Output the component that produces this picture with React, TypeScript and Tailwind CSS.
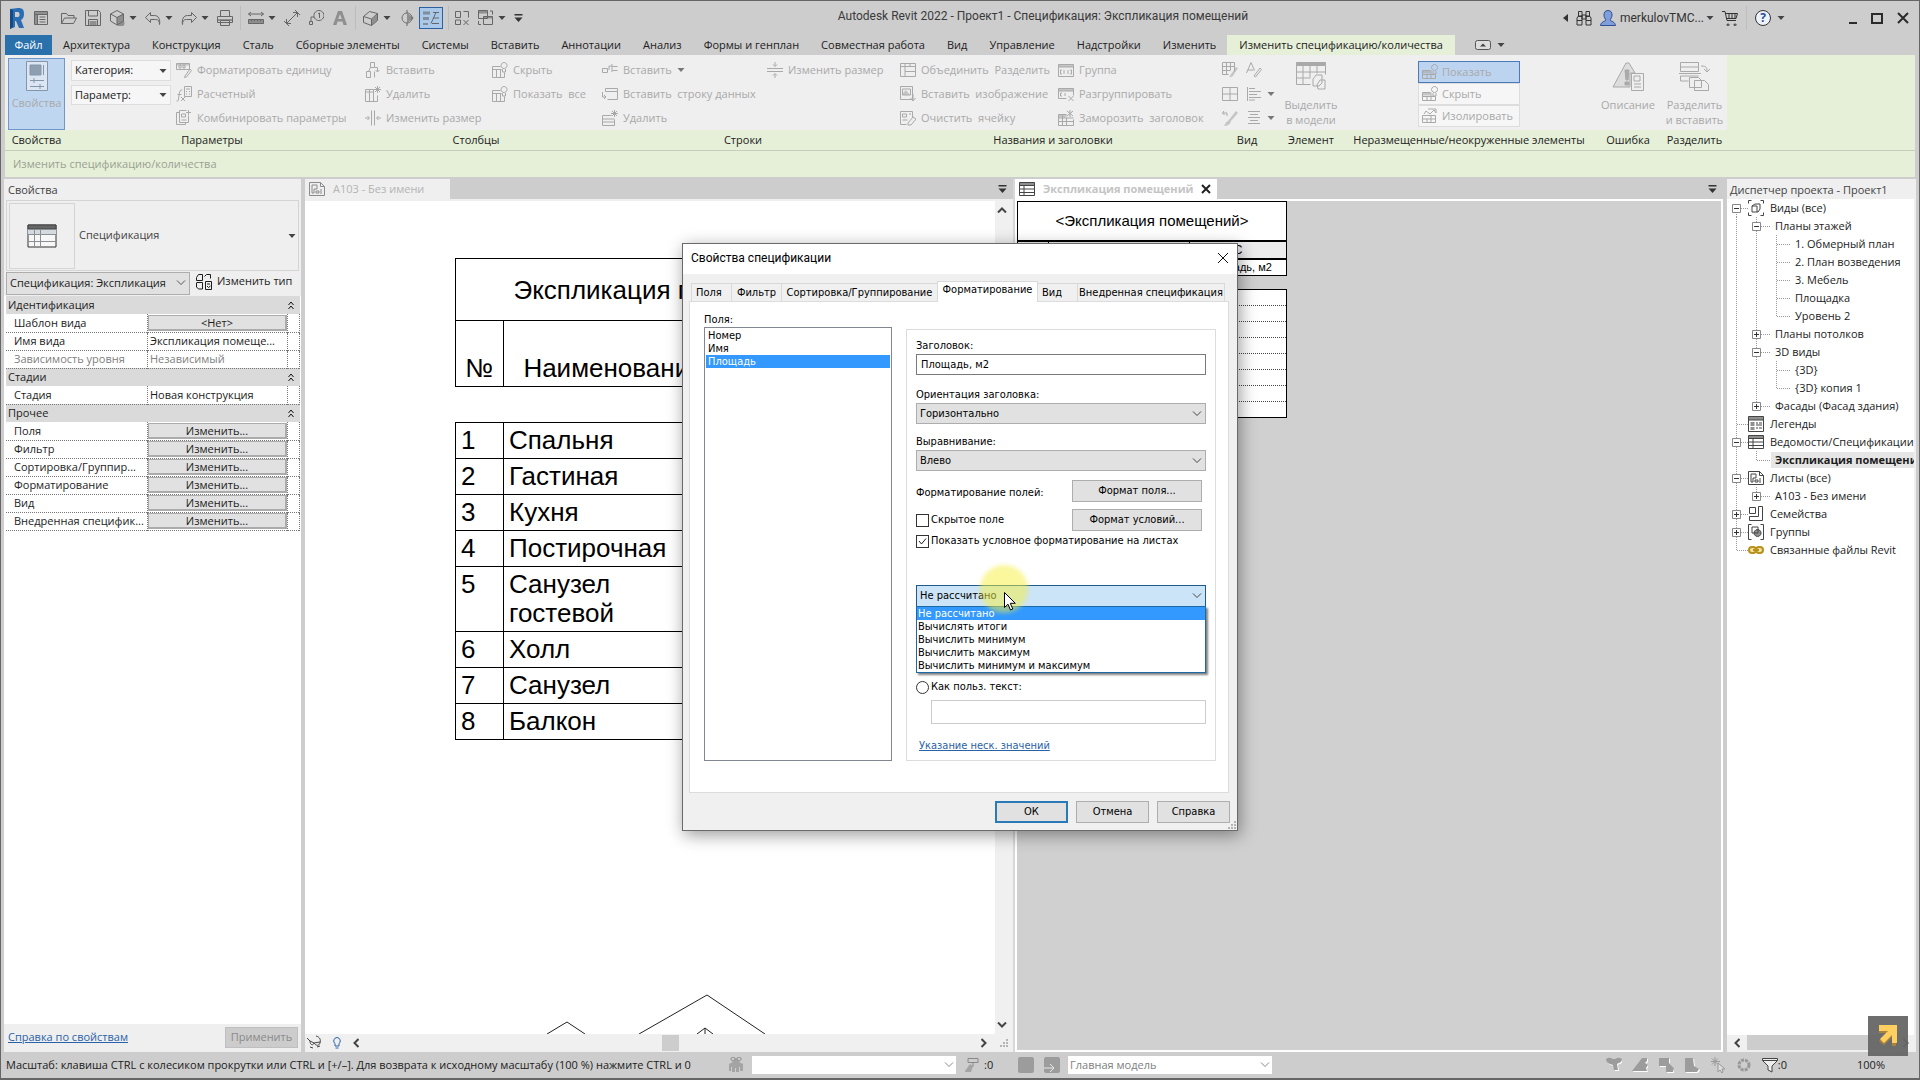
import type { ReactNode } from "react";

interface IconShape {
    d: string;
    fill?: string;
}

const icons: Record<string, IconShape> = {
    props: { d: "M1.5 1.5h13v13h-13zM1.5 4.5h13M4.5 4.5v10M6.5 7h6M6.5 9.5h6M6.5 12h6", fill: "M1.5 1.5h13v3h-13zM2 5h2v9h-2z" },
    open: { d: "M.5 13.5v-10h5l1.5 2h6v2.5M.5 13.5l3-5.500h12l-3 5.500z" },
    save: { d: "M.5 .5h13l2 2v13h-15zM3.500 .5v5.500h9v-5.500M3.500 15.500v-6h9v6", fill: "M4.500 11h7v4h-7z" },
    package: { d: "M8 .5l6.500 3.500v7l-6.500 4-6.500-4v-7zM1.500 4l6.500 3.500 6.500-3.500M8 7.500v7", fill: "M8 7.500l6-3.500v6a4 4 0 1 1-6 5z" },
    undo: { d: "M5.500 2.500l-5 5 5 5v-3h5c3 0 4 1.500 4 5 1-5-1-9-5-9h-4z" },
    redo: { d: "M10.500 2.500l5 5-5 5v-3h-5c-3 0-4 1.500-4 5-1-5 1-9 5-9h4z" },
    print: { d: "M3.500 6v-5.500h9v5.500M.5 6.500h15v6h-15zM3.500 10.500h9v5h-9z", fill: "M1 9h14v2h-14z" },
    measure: { d: "M.5 4h15M3 2l-2.500 2 2.500 2M13 2l2.500 2-2.500 2M.5 9.500h15v4h-15zM3.500 9.500v2M6.500 9.500v2M9.500 9.500v2M12.500 9.500v2", fill: "M.5 10h15v4h-15z" },
    dim: { d: "M3 13l10-10M2.500 9v4.500h4.500M9 2.500h4.500v4.500M0 11l5 5M11 0l5 5" },
    tag: { d: "M1.500 14.500h3v-3h-3zM3 11v-4h3M11 10.500a5 5 0 1 0-.1 0M10 4l1.500-1v5" },
    text: { d: "", fill: "M6 1h4l5 14h-3.500l-1-3.500h-5l-1 3.500h-3.500zM8 4l-1.800 5h3.600z" },
    house: { d: "M.5 6.500l6-5 8 2v7l-6 5-8-3zM.5 6.500l8 2.500 6-5.500M8.500 9v6.500", fill: "M9 9l5-4.500v6l-5 4.500z" },
    section: { d: "M8 0v3M8 13v3M8 3a5 5 0 1 0 .1 0", fill: "M8 3l7 5-7 5z" },
    thin: { d: "M10 2.500h6M8 13.500l5-11M10 8h6M9 13.500h7", fill: "M0 1.500h7v3h-7zM0 7h6v3h-6zM0 13h5v2h-5z" },
    closeHidden: { d: "M1.500 1.500h5v6h-5zM9.500 1.500h5v6M1.500 10h5v4.500h-5zM9.500 10l5 5M14.500 10l-5 5" },
    windows: { d: "M.5 .5h9v8h-9zM5.500 6.500h9v8h-9zM12 1h2.500v3.500M3 14.500h-2.500v-3.500", fill: "M.5 .5h9v3h-9zM5.500 6.500h9v2h-9z" },
    unit: { d: "M.5 1.500h13v6h-13zM3 6v-3h2v3zM7 6v-3h2v3zM9 14l5-7 1.500 1.500-5 6.500-2 .5z", fill: "M.5 1.500h13v2h-13z" },
    calc: { d: "M8.500 .5h7v10h-7zM10 3h4M10 5.500h1M13 5.500h1M10 8h1M13 8h1M6.500 4c-3-1-3 3-4 9-.3 2-1 2.500-2 2M1.500 8.500h4M5 11l4 4M9 11l-4 4" },
    combine: { d: "M3.500 2.500h-3v12h9v-2M3.500 .5h7M3.500 .5v12h9v-7M12.500 0v5M10 2.500h5M5.500 4h4v3h-4zM5.500 10h5" },
    colInsert: { d: "M5.500 .5h4v5h-4zM1.500 9.500h4v6h-4zM5.500 5.500l-2 4M9.500 5.500h3v4M10.500 8l2 2 2-2M9.500 15.500v-6" },
    colDelete: { d: "M.5 3.500h8M.5 3.500v12h12v-6M4.500 3.500v12M8.500 3.500v12M.5 6h8M10 1l5 5M15 1l-5 5M12.500 0v7M9 3.500h7" },
    colResize: { d: "M6.500 .5v15M9.500 .5v15M0 8h4M12 8h4M2.500 6l2 2-2 2M13.500 6l-2 2 2 2" },
    hide: { d: "M.5 4.500h8M.5 4.500v11h12v-5M.5 7.500h9M4.500 7.500v8M8.500 7.500v8M12 6.500a3 3 0 1 1 .1 0M10.500 7v3h3v-3" },
    rowInsert: { d: "M.5 6.500h5v4h-5zM10.500 4.500h5M10.500 8.500h5M7 8v-4h3M10 2v8" },
    rowData: { d: "M3.500 2.500h12v11h-10M3.500 2.500v3M3.500 5.500h12M.5 6v5h3M2 9l2 2-2 2" },
    rowDelete: { d: "M.5 5.500h9M.5 5.500v10h12v-6M.5 9h12M.5 12h12M10 1l5 5M15 1l-5 5M12.500 0v7M9 3.500h7" },
    rowResize: { d: "M0 6.500h16M0 9.500h16M8 0v4M8 12v4M6 2.500l2 2 2-2M6 13.500l2-2 2 2" },
    merge: { d: "M.5 1.500h15v13h-15zM.5 4.500h15M5 1.500v13M5 9.500h10M10 1.500v3" },
    image: { d: "M.5 .5h12v13h-12zM2.500 3h8v6h-8zM13 8v6M10.500 12l2.500 3 2.500-3", fill: "M3 7l3-3 4 5h-7z" },
    clear: { d: "M.5 1.500h12v6M.5 1.500v13h6M2.500 4h4v3h-4zM9 4h2M2.500 10h5M8 13l5-6 3 2-5 6h-3z" },
    group: { d: "M.5 2.500h15v12h-15zM.5 5h15M4 8h-1.500v4h1.500M12 8h1.500v4h-1.500M6 8v4M10 8v4", fill: "M.5 2.500h15v2.500h-15z" },
    ungroup: { d: "M.5 2.500h15v7M.5 2.500v10h8M.5 5h15M4 7h-1.500v3h1.500M7 7v3M10.500 10l5 5M15.500 10l-5 5", fill: "M.5 2.500h15v2.500h-15z" },
    freeze: { d: "M.5 4.500h8M.5 4.500v11h15v-6M.5 8h15M.5 11.500h15M4.500 4.500v11M8.500 8v7M12 0v7M9 1l6 5M15 1l-6 5", fill: "M.5 4.500h8v3h-8z" },
    gridBrush: { d: "M.5 .5h12v9M.5 .5v12h6M.5 4.500h12M.5 8.500h8M4.500 .5v12M8.500 .5v8", fill: "M14 5l2 1-4 6c-1 3-3 3-5 3 2-1 1-3 3-4z" },
    fontEdit: { d: "M.5 11l4.500-10.500 3.500 8M2 8h5.500M8 14l6-8 1.500 1.500-6 7.500z" },
    border: { d: "M.5 1.500h15v13h-15zM8 1.500v13M.5 8h15" },
    alignLeft: { d: "M1.500 1v14M3 2.500h6M3 5.500h12M3 8.500h8M3 11.500h12M3 14h6" },
    brush: { d: "M2 1l-1.500 2 2 2M.5 3h4.500v3", fill: "M14 1l2 2-7 8c-1 4-4 5-7 5 2-2 1-4 4-5z" },
    alignCenter: { d: "M2 1.500h12M4 4.500h8M2 7.500h12M4 10.500h8M2 13.500h12" },
    showRow: { d: "M.5 6.500h8M.5 6.500v8h13v-4M.5 10.500h13M5 10.500v4M9 6.500v8M12.500 6.500a3 3 0 1 1 .1 0M11 7v3h3v-3", fill: "M.5 6.500h8v3h-8z" },
    isolate: { d: "M.5 7.500v7h13v-7zM.5 11h13M5 11v3M9 7.500v7M2 6l2-3 4 3 4-4 2 3M6 1h8v4" },
    sched: { d: "M.5 1.500h15v13h-15zM.5 4.500h15M.5 8h15M.5 11.500h15M5 4.500v10", fill: "M.5 1.500h15v3h-15z" },
    sheet: { d: "M.5 1.500h11l4 4v9h-15zM11.500 1.500v4h4M3 4h5v4h-3v4h-2zM7 12v-2h3v2zM12 8v5" },
    views: { d: "M3.500 .5h-3v3M12.500 .5h3v3M.5 12.500v3h3M15.500 12.500v3h-3M4 6l3-2h5v5l-2 3h-6zM4 6h5v6" },
    legend: { d: "M.5 .5h15v15h-15zM.5 4h15M8 7h2M11 7h3M8 9h6M8 12h2M11 12h3", fill: "M.5 .5h15v3.500h-15zM2.500 6h4v4h-4zM2.500 11h4v3h-4z" },
    family: { d: "M1.500 1.500h6v6h-6zM10.500 .5h4v14h-13v-4h9z" },
    groups: { d: "M3.500 .5h-3v15h3M12.500 .5h3v15h-3M4 3h6v6h-6zM9.500 12.500a3.500 3.500 0 1 1 .1 0", fill: "M9.500 12.500a3.500 3.500 0 1 1 .1 0z" },
    typeEdit: { d: "M.5 3.500l2-3h4v6h-6zM8.500 2.500l2-2h4v4M.5 9v4l2 2h4v-6.500h-6M9.500 7.500h6v8h-6zM11 10h3M11 12l1.500 1.500 2-1.500" },
    binoculars: { d: "M2.500 1.500h3.500v5h-3.500zM10 1.500h3.500v5h-3.500zM1 8l1.500-2h3.500v9h-5zM15 8l-1.500-2h-3.500v9h5zM6 5h4v4h-4zM1 10.500h5M10 10.500h5" },
    cart: { d: "M0 1.500h3l2 9h9M3.500 3.500h12l-1.500 5h-9.500M6 14a1 1 0 1 0 .1 0M13 14a1 1 0 1 0 .1 0M7 3.500v5M10 3.500v5M13 3.500v5" },
    glasses: { d: "M0 3l3 3c0 4 3 5 4 2 2 3 5 3 6 0 1-3 0-6-4-7M3 6l4 2M7 8l6-1M3 12l3 1M10 12l3-1" },
    bulb: { d: "M8 2.500a3.500 3.500 0 0 1 2 6.200v2.300h-4v-2.300a3.500 3.500 0 0 1 2-6.200M6.500 13h3" },
    worker: { d: "M5 4a2 2 0 1 1 .1 0M11 4a2 2 0 1 1 .1 0", fill: "M1 7l4-2 3-4 3 4 4 2v7h-3v-4h-1v5h-3v-4h-1v4h-3v-5h-1v4h-2z" },
    painter: { d: "M4 1.500h10v4h-10zM9 5.500v4", fill: "M1 14l5-7 3 2-2 6h-6z" },
};

function Icon({ name, className = "size-4" }: { name: string; className?: string }) {
    const shape = icons[name];
    return (
        <svg viewBox="0 0 16 16" className={"shrink-0 " + className} aria-hidden="true">
            {shape.fill && <path d={shape.fill} fill="currentColor" fillRule="evenodd" opacity="0.6" />}
            <path d={shape.d} fill="none" stroke="currentColor" strokeWidth="1" />
        </svg>
    );
}

function Caret({ className = "text-[#444]" }: { className?: string }) {
    return (
        <svg viewBox="0 0 8 4" className={"h-1 w-2 shrink-0 " + className} aria-hidden="true">
            <path d="M0.500 0h7L4 4z" fill="currentColor" />
        </svg>
    );
}

function Chevron({ className }: { className?: string }) {
    return (
        <svg viewBox="0 0 10 6" className={"h-1.5 w-2.5 shrink-0 " + className} fill="none" stroke="currentColor" aria-hidden="true">
            <path d="M1 0.500l4 4 4-4" />
        </svg>
    );
}

function TabMenuArrow() {
    return (
        <svg viewBox="0 0 9 8" className="h-2 w-[9px] shrink-0 text-[#333]" aria-hidden="true">
            <path d="M0.500 0h8v1.500h-8zM0.500 3.500h8L4.500 8z" fill="currentColor" />
        </svg>
    );
}

function Divider({ className = "mx-[7px]" }: { className?: string }) {
    return <div className={"h-6 w-px shrink-0 bg-[#bdbdbd] " + className} />;
}

function ToolButton({ icon, label, drop }: { icon: string; label: string; drop?: boolean }) {
    return (
        <button aria-label={label} className="flex items-center gap-1">
            <Icon name={icon} />
            {drop && <Caret />}
        </button>
    );
}

function TitleBar() {
    return (
        <div className="flex h-[35px] items-center border-t border-[#666] bg-[#cdcdcd] pr-2.5 pl-[9px] text-[#666]">
            <svg viewBox="0 0 14 21" className="h-[21px] w-3.5 shrink-0" aria-label="Revit">
                <path d="M0 1l8-1c5 0 6 2 6 6 0 3-1 5-3 6l3 8h-5l-3-7H5v6l-5 2z" fill="#2a6db3" />
                <path d="M5 4h3c2 0 2 5 0 5H5z" fill="#cdcdcd" />
                <path d="M0 1l3 1v17l-3 2z" fill="#174a85" />
            </svg>
            <div className="mr-3 ml-[9px]">
                <ToolButton icon="props" label="Свойства" />
            </div>
            <div className="flex items-center gap-2">
                <ToolButton icon="open" label="Открыть" />
                <ToolButton icon="save" label="Сохранить" />
                <ToolButton icon="package" label="Синхронизировать" drop />
                <ToolButton icon="undo" label="Отменить" drop />
                <ToolButton icon="redo" label="Повторить" drop />
                <ToolButton icon="print" label="Печать" />
            </div>
            <Divider />
            <div className="flex items-center gap-2">
                <ToolButton icon="measure" label="Измерить" drop />
                <ToolButton icon="dim" label="Размер" />
                <ToolButton icon="tag" label="Марка" />
                <ToolButton icon="text" label="Текст" />
            </div>
            <Divider />
            <div className="flex items-center gap-2">
                <ToolButton icon="house" label="3D вид" drop />
                <ToolButton icon="section" label="Разрез" />
                <button aria-label="Тонкие линии" className="-ml-1 flex h-[22px] w-6 items-center justify-center border border-[#2c5f9e] bg-[#a9c8ea]">
                    <Icon name="thin" />
                </button>
            </div>
            <Divider className="mx-[5px]" />
            <div className="flex items-center gap-2">
                <ToolButton icon="closeHidden" label="Закрыть неактивные" />
                <ToolButton icon="windows" label="Переключить окна" drop />
                <button aria-label="Настроить панель"><TabMenuArrow /></button>
            </div>
            <h1 className="min-w-0 flex-1 truncate pb-1 text-center font-[Roboto,sans-serif] text-xs text-[#3a3a3a]">
                Autodesk Revit 2022 - Проект1 - Спецификация: Экспликация помещений
            </h1>
            <div className="flex items-center gap-2 text-[#333]">
                <svg viewBox="0 0 5 8" className="h-2 w-[5px]"><path d="M5 0v8L0 4z" fill="#333" /></svg>
                <Icon name="binoculars" />
                <svg viewBox="0 0 16 16" className="size-4" aria-hidden="true">
                    <path d="M8 .5c3 0 4 2 4 4.500S10.500 9 10 10c1 1.500 5 1.500 5.500 5.500H.5C1 11.500 5 11.500 6 10 5.500 9 4 7.500 4 5S5 .5 8 .5z" fill="#7f9fdc" stroke="#31508f" />
                </svg>
                <button className="-ml-1 flex items-center gap-0.5 font-[Roboto,sans-serif] text-xs whitespace-nowrap">merkulovTMC...<Caret /></button>
                <Icon name="cart" />
                <div className="h-6 w-px bg-[#bdbdbd]" />
                <button aria-label="Справка" className="flex items-center gap-1.5">
                    <span className="flex size-4 items-center justify-center rounded-full border border-[#333] bg-[#eef3fb] text-xs font-bold text-[#27509b]">?</span>
                    <Caret />
                </button>
            </div>
            <div className="ml-16 flex items-center gap-3.5 text-[#2b2b2b]">
                <button aria-label="Свернуть" className="flex h-3 w-2 items-end"><span className="h-0.5 w-2 bg-[#2b2b2b]" /></button>
                <button aria-label="Развернуть" className="h-[11px] w-3 border-2 border-[#2b2b2b]" />
                <button aria-label="Закрыть">
                    <svg viewBox="0 0 12 12" className="size-3" stroke="currentColor" strokeWidth="2"><path d="M1 1l10 10M11 1L1 11" /></svg>
                </button>
            </div>
        </div>
    );
}

const tabs = ["Архитектура", "Конструкция", "Сталь", "Сборные элементы", "Системы", "Вставить", "Аннотации", "Анализ", "Формы и генплан", "Совместная работа", "Вид", "Управление", "Надстройки", "Изменить"];

function RibbonTabs() {
    return (
        <nav className="flex h-5 items-stretch bg-[#cdcdcd] pl-1 text-[#222]">
            <button className="w-[47px] bg-[#2a70ab] text-white">Файл</button>
            <div className="flex">
                {tabs.map((tab) => (
                    <button key={tab} className="px-[11px] whitespace-nowrap">{tab}</button>
                ))}
            </div>
            <button className="bg-[#e6f0d8] px-3 whitespace-nowrap">Изменить спецификацию/количества</button>
            <button aria-label="Свернуть ленту" className="ml-5 flex items-center gap-1.5">
                <svg viewBox="0 0 16 10" className="h-2.5 w-4"><rect x="0.500" y="0.500" width="15" height="9" rx="2" fill="#ddd" stroke="#555" /><path d="M5 6.500h6L8 3.500z" fill="#444" /></svg>
                <Caret />
            </button>
        </nav>
    );
}

function Cmd({ icon, children, drop }: { icon: string; children?: ReactNode; drop?: boolean }) {
    return (
        <button disabled className="flex h-6 items-center gap-[5px] whitespace-nowrap">
            <Icon name={icon} />
            {children}
            {drop && <Caret className="text-[#777]" />}
        </button>
    );
}

function Panel({ label, className, children }: { label: string; className: string; children: ReactNode }) {
    return (
        <section className={"flex shrink-0 flex-col " + className}>
            <div className="flex h-[75px] bg-[#efefef] pt-[3px] text-[#a9a9a9]">{children}</div>
            <h2 className="flex h-5 items-center justify-center bg-[#e6f0d8] whitespace-nowrap text-[#222]">{label}</h2>
        </section>
    );
}

function Ribbon() {
    return (
        <div className="mr-1 ml-1 flex border-b border-[#c6cdba] bg-[#e6f0d8]">
            <Panel label="Свойства" className="w-[63px]">
                <button className="ml-[3px] flex h-[72px] w-[57px] flex-col items-center gap-1 border border-[#6f97cb] bg-[#bfd6f0] pt-0.5">
                    <svg viewBox="0 0 22 30" className="h-[30px] w-[22px]" fill="none" stroke="#8496ab" aria-hidden="true">
                        <path d="M.5 .5h21v29H.5z" fill="#dce6f2" />
                        <path d="M4 4h11v10H4z" fill="#8f9fb2" />
                        <path d="M17.500 4v10M4 19.500h14M4 25.500h14M8 17v5M14 23v5" />
                    </svg>
                    Свойства
                </button>
            </Panel>
            <Panel label="Параметры" className="w-[288px]">
                <div className="ml-[3px] flex w-[100px] flex-col gap-1 pt-0.5 text-[#222]">
                    <button className="flex h-[21px] items-center justify-between border border-[#ddd] bg-[#f6f6f6] px-[3px]">Категория:<Caret /></button>
                    <button className="flex h-5 items-center justify-between border border-[#ddd] bg-[#f6f6f6] px-[3px]">Параметр:<Caret /></button>
                </div>
                <div className="ml-[5px]">
                    <Cmd icon="unit">Форматировать единицу</Cmd>
                    <Cmd icon="calc">Расчетный</Cmd>
                    <Cmd icon="combine">Комбинировать параметры</Cmd>
                </div>
            </Panel>
            <Panel label="Столбцы" className="w-[240px]">
                <div className="ml-[9px] w-[127px]">
                    <Cmd icon="colInsert">Вставить</Cmd>
                    <Cmd icon="colDelete">Удалить</Cmd>
                    <Cmd icon="colResize">Изменить размер</Cmd>
                </div>
                <div>
                    <Cmd icon="hide">Скрыть</Cmd>
                    <Cmd icon="hide">Показать&nbsp; все</Cmd>
                </div>
            </Panel>
            <Panel label="Строки" className="w-[294px]">
                <div className="ml-1.5 w-[165px]">
                    <Cmd icon="rowInsert" drop>Вставить</Cmd>
                    <Cmd icon="rowData">Вставить&nbsp; строку данных</Cmd>
                    <Cmd icon="rowDelete">Удалить</Cmd>
                </div>
                <div>
                    <Cmd icon="rowResize">Изменить размер</Cmd>
                </div>
            </Panel>
            <Panel label="Названия и заголовки" className="w-[326px]">
                <div className="ml-2.5 w-[158px]">
                    <Cmd icon="merge">Объединить&nbsp; Разделить</Cmd>
                    <Cmd icon="image">Вставить&nbsp; изображение</Cmd>
                    <Cmd icon="clear">Очистить&nbsp; ячейку</Cmd>
                </div>
                <div>
                    <Cmd icon="group">Группа</Cmd>
                    <Cmd icon="ungroup">Разгруппировать</Cmd>
                    <Cmd icon="freeze">Заморозить&nbsp; заголовок</Cmd>
                </div>
            </Panel>
            <Panel label="Вид" className="w-[62px]">
                <div className="ml-1.5 w-6">
                    <Cmd icon="gridBrush" />
                    <Cmd icon="border" />
                    <Cmd icon="brush" />
                </div>
                <div>
                    <Cmd icon="fontEdit" />
                    <Cmd icon="alignLeft" drop />
                    <Cmd icon="alignCenter" drop />
                </div>
            </Panel>
            <Panel label="Элемент" className="w-[66px]">
                <button disabled className="flex w-full flex-col items-center pt-[3px] leading-[15px]">
                    <svg viewBox="0 0 32 30" className="mb-1.5 h-[30px] w-8" fill="none" stroke="currentColor" aria-hidden="true">
                        <path d="M1.500 1.500h29v3h-29z" fill="currentColor" />
                        <path d="M1.500 4.500v19h14M30.500 4.500v9M1.500 11h29M1.500 17h14M8 4.500v19M15 4.500v12M22 4.500v8" />
                        <path d="M18 18l3-4h6v8l-3 3h-6zM22 24l3-5h5v9h-7z" fill="#efefef" />
                    </svg>
                    <span>Выделить</span>
                    <span>в модели</span>
                </button>
            </Panel>
            <Panel label="Неразмещенные/неокруженные элементы" className="w-[250px]">
                <div className="mx-auto flex w-[102px] flex-col pt-[3px]">
                    <button className="flex h-[22px] items-center gap-1 border border-[#4a7ab8] bg-[#bcd4ef] pl-[3px]"><Icon name="showRow" />Показать</button>
                    <button className="flex h-[22px] items-center gap-1 border border-[#ddd] bg-[#f6f6f6] pl-[3px]"><Icon name="showRow" />Скрыть</button>
                    <button className="flex h-[22px] items-center gap-1 border border-[#ddd] bg-[#f6f6f6] pl-[3px]"><Icon name="isolate" />Изолировать</button>
                </div>
            </Panel>
            <Panel label="Ошибка" className="w-[68px]">
                <button disabled className="flex w-full flex-col items-center pt-[3px] leading-[15px]">
                    <svg viewBox="0 0 32 30" className="mb-1.5 h-[30px] w-8" fill="none" stroke="currentColor" aria-hidden="true">
                        <path d="M14 2L1 26h17V12h5L17 2z" fill="#ddd" />
                        <path d="M13 9h4l-1 10h-2zM13 21h4v3h-4z" fill="currentColor" />
                        <path d="M19.500 12.500h12v17h-12z" fill="#efefef" />
                        <path d="M22 15h6v5h-6zM22 23h7M22 26h7" />
                    </svg>
                    Описание
                </button>
            </Panel>
            <Panel label="Разделить" className="w-[65px]">
                <button disabled className="flex w-full flex-col items-center pt-[3px] leading-[15px]">
                    <svg viewBox="0 0 32 30" className="mb-1.5 h-[30px] w-8" fill="none" stroke="currentColor" aria-hidden="true">
                        <path d="M1.500 1.500h18v9h-18zM1.500 6h18M0 12.500h22M1.500 20v-5h18M1.500 20h8M22 5c6 0 6 2 6 6M25 8l3 3 3-3" />
                        <path d="M10.500 16.500h9l3 3v7h-12zM15.500 19.500h10l4 4v6h-14z" fill="#efefef" />
                    </svg>
                    <span>Разделить</span>
                    <span>и вставить</span>
                </button>
            </Panel>
        </div>
    );
}

interface PropRow {
    label: string;
    value?: string;
    kind: "head" | "button" | "text" | "muted";
}

const propRows: PropRow[] = [
    { label: "Идентификация", kind: "head" },
    { label: "Шаблон вида", value: "<Нет>", kind: "button" },
    { label: "Имя вида", value: "Экспликация помеще...", kind: "text" },
    { label: "Зависимость уровня", value: "Независимый", kind: "muted" },
    { label: "Стадии", kind: "head" },
    { label: "Стадия", value: "Новая конструкция", kind: "text" },
    { label: "Прочее", kind: "head" },
    { label: "Поля", value: "Изменить...", kind: "button" },
    { label: "Фильтр", value: "Изменить...", kind: "button" },
    { label: "Сортировка/Группир...", value: "Изменить...", kind: "button" },
    { label: "Форматирование", value: "Изменить...", kind: "button" },
    { label: "Вид", value: "Изменить...", kind: "button" },
    { label: "Внедренная специфик...", value: "Изменить...", kind: "button" },
];

function Properties() {
    return (
        <aside className="flex w-[297px] shrink-0 flex-col bg-[#efefef] text-[#1c1c1c]">
            <h2 className="h-[21px] pl-1 leading-[22px] text-[#444]">Свойства</h2>
            <div className="mx-0.5 flex h-[71px] items-center border border-[#d4d4d4] pr-0.5 pl-0.5 text-[#444]">
                <div className="flex size-[66px] items-center justify-center border border-[#d4d4d4]">
                    <svg viewBox="0 0 30 24" className="h-6 w-[30px]" fill="none" stroke="#8a8f94" aria-hidden="true">
                        <path d="M1 1h28v22H1z" fill="#f7f7f7" stroke="#333" />
                        <path d="M1 5h28v5H1z" fill="#d5dae0" stroke="none" />
                        <path d="M1 1h28v4H1z" fill="#666" stroke="#444" />
                        <path d="M1 10.500h28M1 17.500h28M7.500 5v18M13.500 5v18" />
                    </svg>
                </div>
                <span className="ml-1 flex-1">Спецификация</span>
                <Caret />
            </div>
            <div className="mx-0.5 flex h-[25px] items-center">
                <div className="relative">
                    <select aria-label="Вид" className="block h-[23px] w-[184px] appearance-none border border-[#adadad] bg-[#e1e1e1] pl-[3px]">
                        <option>Спецификация: Экспликация</option>
                    </select>
                    <Chevron className="pointer-events-none absolute top-2 right-1 text-[#555]" />
                </div>
                <button className="ml-1.5 flex items-center gap-[5px] pb-1 whitespace-nowrap"><Icon name="typeEdit" />Изменить тип</button>
            </div>
            <div className="min-h-0 flex-1 bg-white">
                <table className="ml-0.5 w-[294px] table-fixed border-collapse">
                    <colgroup>
                        <col />
                        <col className="w-[140px]" />
                        <col className="w-3" />
                    </colgroup>
                    <tbody>
                        {propRows.map((row) =>
                            row.kind === "head" ? (
                                <tr key={row.label} className="h-[18px] bg-[#dadada]">
                                    <th colSpan={3} className="p-0 font-normal">
                                        <div className="flex h-[17px] items-center justify-between pr-1.5 pl-0.5">
                                            {row.label}
                                            <svg viewBox="0 0 6 9" className="h-[9px] w-1.5" fill="none" stroke="#111"><path d="M0.500 4l2.500-3 2.500 3M0.500 8l2.500-3 2.500 3" /></svg>
                                        </div>
                                    </th>
                                </tr>
                            ) : (
                                <tr key={row.label} className={"h-[18px] border-b border-dotted border-[#777] " + (row.kind === "muted" ? "text-[#808080]" : "")}>
                                    <td className="overflow-hidden p-0 pl-2 leading-4 whitespace-nowrap">{row.label}</td>
                                    <td className="overflow-hidden border-x border-dotted border-[#777] p-0 leading-4 whitespace-nowrap">
                                        {row.kind === "button" ? (
                                            <button className="block h-4 w-full border border-r-2 border-b-2 border-[#ababab] bg-[#e1e1e1] leading-[14px]">{row.value}</button>
                                        ) : (
                                            <span className="pl-0.5">{row.value}</span>
                                        )}
                                    </td>
                                    <td className="border-r border-dotted border-[#777] p-0" />
                                </tr>
                            )
                        )}
                    </tbody>
                </table>
            </div>
            <div className="flex h-7 items-center justify-between pr-[3px] pb-0.5 pl-1">
                <a href="#help" className="text-[#2a62a8] underline">Справка по свойствам</a>
                <button disabled className="h-[21px] w-[73px] border border-[#bfbfbf] bg-[#cccccc] text-[#8a8a8a]">Применить</button>
            </div>
        </aside>
    );
}

const rooms = ["Спальня", "Гастиная", "Кухня", "Постирочная", "Санузел гостевой", "Холл", "Санузел", "Балкон"];

function SheetView() {
    return (
        <section className="flex w-[710px] shrink-0 flex-col border-r-2 border-[#d8d8d8]">
            <div className="flex h-5 items-center bg-[#cdcdcd] pr-1.5">
                <button className="flex h-full w-[145px] items-center gap-2 bg-[#efefef] pl-1 text-[#b4b4b4]">
                    <Icon name="sheet" className="size-4 text-[#8c8c8c]" />
                    А103 - Без имени
                </button>
                <div className="flex-1" />
                <TabMenuArrow />
            </div>
            <div className="h-0.5 bg-[#efefef]" />
            <div className="flex min-h-0 flex-1">
                <div className="flex min-w-0 flex-1 flex-col justify-between overflow-hidden bg-white pt-[57px] font-[Liberation_Sans,Arial,sans-serif] text-[26px] leading-7 text-black">
                    <div className="ml-[150px] w-[421px]">
                        <table className="w-full table-fixed border-collapse">
                            <colgroup>
                                <col className="w-12" />
                                <col className="w-[220px]" />
                                <col />
                            </colgroup>
                            <thead>
                                <tr className="h-[62px]"><th colSpan={3} className="border border-black p-0 font-normal">Экспликация помещений</th></tr>
                                <tr className="h-[66px] align-bottom">
                                    <th className="border border-black p-0 pb-1 font-normal">№</th>
                                    <th className="border border-black p-0 pb-1 font-normal">Наименование</th>
                                    <th className="border border-black p-0" />
                                </tr>
                            </thead>
                        </table>
                        <table className="mt-[35px] w-full table-fixed border-collapse">
                            <colgroup>
                                <col className="w-12" />
                                <col className="w-[220px]" />
                                <col />
                            </colgroup>
                            <tbody>
                                {rooms.map((room, i) => (
                                    <tr key={room} className="h-9">
                                        <td className="border border-black p-0 pl-[5px] align-top leading-[34px]">{i + 1}</td>
                                        <td className="border border-black p-0 py-[3px] pr-12 pl-[5px] leading-[29px]">{room}</td>
                                        <td className="border border-black p-0" />
                                    </tr>
                                ))}
                            </tbody>
                        </table>
                    </div>
                    <svg viewBox="0 0 220 40" className="ml-[242px] h-10 w-[220px] shrink-0" fill="none" stroke="#222" aria-hidden="true">
                        <path d="M0 40L20 28L38 40M92 40L160 1L218 40M150 40L158 34L166 40M158 34V40" />
                    </svg>
                </div>
                <div className="flex w-[18px] flex-col items-center justify-between bg-[#f0f0f0] py-1.5 pr-1 text-[#444]">
                    <Chevron className="rotate-180 stroke-2" />
                    <Chevron className="stroke-2" />
                </div>
            </div>
            <div className="flex h-[18px] items-center bg-[#f0f0f0] pl-0.5 text-[#444]">
                <Icon name="glasses" />
                <Icon name="bulb" className="ml-1.5 size-4 text-[#2a62a8]" />
                <Chevron className="ml-1.5 rotate-90 stroke-2" />
                <div className="ml-[301px] h-4 w-[17px] bg-[#cdcdcd]" />
                <div className="flex-1" />
                <Chevron className="mr-[11px] -rotate-90 stroke-2" />
                <Grip />
            </div>
        </section>
    );
}

function Grip() {
    return (
        <svg viewBox="0 0 9 9" className="mr-1 size-[9px] shrink-0" fill="#b5b5b5" aria-hidden="true">
            <path d="M6 0h2v2H6zM3 3h2v2H3zM6 3h2v2H6zM0 6h2v2H0zM3 6h2v2H3zM6 6h2v2H6z" />
        </svg>
    );
}

function ScheduleView() {
    return (
        <section className="flex min-w-0 flex-1 flex-col border-l-2 border-white font-[Liberation_Sans,Arial,sans-serif] text-xs text-black">
            <div className="flex h-5 items-center bg-[#cdcdcd] pr-1.5">
                <div className="flex h-full w-[200px] items-center bg-white pl-0.5 font-[Open_Sans,sans-serif] text-[11px] font-bold whitespace-nowrap text-[#c4c4c4]">
                    <Icon name="sched" className="size-4 text-[#444]" />
                    <span className="ml-2 flex-1">Экспликация помещений</span>
                    <button aria-label="Закрыть вкладку" className="mr-1.5">
                        <svg viewBox="0 0 10 10" className="size-2.5" stroke="#222" strokeWidth="2"><path d="M1 1l8 8M9 1L1 9" /></svg>
                    </button>
                </div>
                <div className="flex-1" />
                <TabMenuArrow />
            </div>
            <div className="flex-1 border-t-2 border-r-2 border-b-2 border-white bg-[#d0d0d0]">
                <div className="w-[270px]">
                    <div className="flex h-10 items-center justify-center border border-black bg-white text-[15px]">&lt;Экспликация помещений&gt;</div>
                    <table className="w-full table-fixed border-collapse text-center">
                        <colgroup>
                            <col className="w-[31px]" />
                            <col />
                            <col className="w-[97px]" />
                        </colgroup>
                        <thead>
                            <tr className="h-[17px] bg-[#ececec]">
                                <th className="border border-black p-0" />
                                <th className="border border-black p-0" />
                                <th className="border border-black p-0 leading-4 font-normal">C</th>
                            </tr>
                            <tr className="h-4 bg-white">
                                <th className="border border-t-2 border-black p-0" />
                                <th className="border border-t-2 border-black p-0" />
                                <th className="border border-t-2 border-black p-0 text-[11px] leading-[14px] font-normal">Площадь, м2</th>
                            </tr>
                        </thead>
                    </table>
                    <table className="mt-[13px] w-full table-fixed border-collapse border border-black bg-white">
                        <tbody>
                            {rooms.map((room) => (
                                <tr key={room} className="h-4 border-b border-dotted border-[#444]">
                                    <td className="p-0" />
                                </tr>
                            ))}
                        </tbody>
                    </table>
                </div>
            </div>
        </section>
    );
}

interface TreeRow {
    cells: string[];
    text: string;
    icon?: string;
    active?: boolean;
}

// v - line, t - tee, l - corner, +/- - expander, "f" first, "e" last in its branch
const tree: TreeRow[] = [
    { cells: ["-f"], icon: "views", text: "Виды (все)" },
    { cells: ["v", "-"], text: "Планы этажей" },
    { cells: ["v", "v", "t"], text: "1. Обмерный план" },
    { cells: ["v", "v", "t"], text: "2. План возведения" },
    { cells: ["v", "v", "t"], text: "3. Мебель" },
    { cells: ["v", "v", "t"], text: "Площадка" },
    { cells: ["v", "v", "l"], text: "Уровень 2" },
    { cells: ["v", "+"], text: "Планы потолков" },
    { cells: ["v", "-"], text: "3D виды" },
    { cells: ["v", "v", "t"], text: "{3D}" },
    { cells: ["v", "v", "l"], text: "{3D} копия 1" },
    { cells: ["v", "+e"], text: "Фасады (Фасад здания)" },
    { cells: ["t"], icon: "legend", text: "Легенды" },
    { cells: ["-"], icon: "sched", text: "Ведомости/Спецификации" },
    { cells: ["v", "l"], text: "Экспликация помещений", active: true },
    { cells: ["-"], icon: "sheet", text: "Листы (все)" },
    { cells: ["v", "+e"], text: "А103 - Без имени" },
    { cells: ["+"], icon: "family", text: "Семейства" },
    { cells: ["+"], icon: "groups", text: "Группы" },
    { cells: ["l"], icon: "link", text: "Связанные файлы Revit" },
];

function TreeCell({ kind }: { kind: string }) {
    const box = kind[0] === "+" || kind[0] === "-";
    const top = kind.endsWith("f") ? 9 : 0;
    const bottom = kind === "l" || kind.endsWith("e") ? 9 : 18;
    return (
        <svg viewBox="0 0 20 18" className="h-[18px] w-5 shrink-0 overflow-visible" fill="none" aria-hidden="true">
            <path d={`M9.500 ${top}V${bottom}`} stroke="#999" strokeDasharray="1 1" />
            {kind !== "v" && <path d="M10 9.500H24" stroke="#999" strokeDasharray="1 1" />}
            {box && <path d="M5.500 5.500h8v8h-8z" fill="#fff" stroke="#888" />}
            {box && <path d={kind[0] === "+" ? "M7 9.500h5M9.500 7v5" : "M7 9.500h5"} stroke="#333" />}
        </svg>
    );
}

function Browser() {
    return (
        <aside className="flex w-[189px] shrink-0 flex-col bg-[#efefef] text-[#1c1c1c]">
            <h2 className="h-5 pl-[3px] leading-[22px] whitespace-nowrap text-[#444]">Диспетчер проекта - Проект1</h2>
            <ul className="mr-0.5 min-h-0 flex-1 overflow-hidden bg-white">
                {tree.map((row) => (
                    <li key={row.text} className="flex h-[18px] items-center whitespace-nowrap">
                        {row.cells.map((cell, i) => <TreeCell key={i} kind={cell} />)}
                        {row.icon === "link" ? (
                            <svg viewBox="0 0 16 8" className="relative ml-px h-2 w-4 shrink-0" fill="none" stroke="#b8901c" strokeWidth="2" aria-hidden="true">
                                <rect x="1" y="1" width="7" height="6" rx="3" fill="#f3e3a0" /><rect x="8" y="1" width="7" height="6" rx="3" fill="#f3e3a0" /><path d="M5 4h6" />
                            </svg>
                        ) : (
                            row.icon && <Icon name={row.icon} className="relative ml-px size-4 bg-white text-[#444]" />
                        )}
                        <span className={row.active ? "ml-1 flex-1 bg-[#e6e6e6] pl-1 font-bold" : row.icon ? "pl-1.5" : "pl-2"}>{row.text}</span>
                    </li>
                ))}
            </ul>
            <div className="mr-0.5 mb-0.5 flex h-[15px] items-center bg-[#f0f0f0] text-[#444]">
                <Chevron className="mx-[5px] rotate-90 stroke-2" />
                <div className="h-full flex-1 bg-[#cdcdcd]" />
                <Chevron className="mx-[3px] -rotate-90 stroke-2" />
            </div>
        </aside>
    );
}

function StatusBar() {
    return (
        <footer className="flex h-[28px] items-center border-b-2 border-[#666] bg-[#cdcdcd] pl-[5px] text-[#1c1c1c]">
            <p className="w-[716px] overflow-hidden whitespace-nowrap">
                Масштаб: клавиша CTRL с колесиком прокрутки или CTRL и [+/–]. Для возврата к исходному масштабу (100 %) нажмите CTRL и 0
            </p>
            <Icon name="worker" className="ml-1.5 size-4 text-[#888]" />
            <div className="relative ml-2">
                <select aria-label="Рабочий набор" className="block h-[18px] w-[204px] appearance-none bg-white" />
                <Chevron className="pointer-events-none absolute top-1.5 right-0.5 text-[#888]" />
            </div>
            <Icon name="painter" className="ml-2 size-4 text-[#888]" />
            <span className="ml-1 w-2.5">:0</span>
            <span className="ml-6 size-4 rounded-xs bg-[#9c9c9c]" />
            <span className="ml-2.5 flex size-4 items-center justify-center rounded-xs bg-[#9c9c9c]">
                <svg viewBox="0 0 16 16" className="size-4" fill="none" stroke="#e8e8e8"><path d="M0 11h9M6 7l4 4-4 4" /></svg>
            </span>
            <div className="relative ml-2">
                <select aria-label="Вариант" className="block h-[18px] w-[204px] appearance-none bg-white pl-0.5 text-[#808080]">
                    <option>Главная модель</option>
                </select>
                <Chevron className="pointer-events-none absolute top-1.5 right-0.5 text-[#888]" />
            </div>
            <div className="flex-1" />
            <div className="flex items-center gap-2.5">
                {["M0 2c4-3 6 0 8 0s4-3 8 0c0 4-4 4-5 5l1 6H8L7 8C4 7 0 6 0 2z", "M0 14L10 1h5v3l-2 2 3 2-2 3 1 3z", "M1 1h10v5l5 5-1 4H8V9H1z", "M1 1l8 0 1 8 5 3-2 3H1z"].map((d) => (
                    <svg key={d} viewBox="0 0 16 16" className="size-4" aria-hidden="true">
                        <path d={d} fill="#fff" transform="translate(1 1)" />
                        <path d={d} fill="#9c9c9c" />
                    </svg>
                ))}
                <svg viewBox="0 0 16 16" className="size-4" fill="#ddd" stroke="#999" aria-hidden="true">
                    <path d="M5 0v9M1 4.500h9M2 1.500l6 6M8 1.500l-6 6" /><path d="M8 6v9l2-2 2 3 1-1-1-3h3z" />
                </svg>
                <svg viewBox="0 0 16 16" className="size-4" fill="none" stroke="#999" strokeWidth="3" strokeDasharray="3 1" aria-hidden="true"><circle cx="8" cy="8" r="5" /></svg>
                <span className="flex items-center">
                    <svg viewBox="0 0 16 16" className="size-4" fill="#eee" stroke="#444" aria-hidden="true"><path d="M.5 1.500h15v2L10 9v6l-4-2V9L.5 3.500zM.5 3.500h15" /></svg>
                    :0
                </span>
            </div>
            <span className="mr-[34px] ml-[70px]">100%</span>
        </footer>
    );
}

function Combo({ id, value }: { id: string; value: string }) {
    return (
        <div className="relative">
            <select id={id} className="block h-[21px] w-full appearance-none border border-[#adadad] bg-[#e1e1e1] pl-[3px]">
                <option>{value}</option>
            </select>
            <Chevron className="pointer-events-none absolute top-2 right-1 text-[#444]" />
        </div>
    );
}

const totals = ["Не рассчитано", "Вычислять итоги", "Вычислить минимум", "Вычислить максимум", "Вычислить минимум и максимум"];

function ScheduleDialog() {
    return (
        <div role="dialog" aria-label="Свойства спецификации" className="absolute top-[243px] left-[681px] flex h-[588px] w-[556px] flex-col border border-[#6a6a6a] bg-[#f0f0f0] font-[DejaVu_Sans_Condensed,sans-serif] text-[11px] leading-4 text-black shadow-[2px_4px_16px_rgba(0,0,0,0.4)]">
            <div className="flex h-[30px] shrink-0 items-center justify-between bg-white pr-2 pb-0.5 pl-2 font-[Roboto,sans-serif] text-xs">
                Свойства спецификации
                <button aria-label="Закрыть">
                    <svg viewBox="0 0 12 12" className="size-3" stroke="#111"><path d="M1 1l10 10M11 1L1 11" /></svg>
                </button>
            </div>
            <div role="tablist" className="flex h-[27px] shrink-0 items-end pl-2 whitespace-nowrap">
                <button role="tab" className="h-[18px] w-[41px] border border-b-0 border-[#d9d9d9] pl-1 text-left">Поля</button>
                <button role="tab" className="h-[18px] w-[50px] border-t border-r border-[#d9d9d9]">Фильтр</button>
                <button role="tab" className="h-[18px] w-[155px] border-t border-[#d9d9d9]">Сортировка/Группирование</button>
                <button role="tab" aria-selected="true" className="z-10 -mb-px h-[21px] w-[101px] border border-b-0 border-[#d9d9d9] bg-white pb-1">Форматирование</button>
                <button role="tab" className="h-[18px] w-10 border-t border-r border-[#d9d9d9] pl-1 text-left">Вид</button>
                <button role="tab" className="h-[18px] w-[147px] border-t border-r border-[#d9d9d9]">Внедренная спецификация</button>
            </div>
            <div className="mr-2 ml-1.5 flex h-[492px] shrink-0 justify-between border border-[#dcdcdc] bg-white pr-3 pl-3.5">
                <div className="flex w-[188px] flex-col pt-2.5">
                    <span id="fields" className="h-[15px]">Поля:</span>
                    <ul role="listbox" aria-labelledby="fields" className="h-[434px] border border-[#828790] p-px leading-[13px]">
                        <li role="option" className="px-0.5">Номер</li>
                        <li role="option" className="px-0.5">Имя</li>
                        <li role="option" aria-selected="true" className="bg-[#3399ff] px-0.5 text-white">Площадь</li>
                    </ul>
                </div>
                <div className="mt-[27px] flex h-[432px] w-[310px] flex-col border border-[#dcdcdc] px-[9px] pt-2">
                    <label htmlFor="heading">Заголовок:</label>
                    <input id="heading" defaultValue="Площадь, м2" className="h-[21px] border border-[#7a7a7a] pl-1" />
                    <label htmlFor="orient" className="mt-3">Ориентация заголовка:</label>
                    <Combo id="orient" value="Горизонтально" />
                    <label htmlFor="align" className="mt-2.5">Выравнивание:</label>
                    <Combo id="align" value="Влево" />
                    <div className="mt-[9px] flex items-center justify-between pr-1">
                        <span className="pt-1">Форматирование полей:</span>
                        <button className="h-[22px] w-[130px] border border-[#adadad] bg-[#e1e1e1]">Формат поля...</button>
                    </div>
                    <div className="mt-[7px] flex items-center justify-between pr-1">
                        <label className="flex items-center gap-0.5">
                            <input type="checkbox" className="size-[13px] appearance-none border border-[#333] bg-white" />
                            Скрытое поле
                        </label>
                        <button className="h-[22px] w-[130px] border border-[#adadad] bg-[#e1e1e1]">Формат условий...</button>
                    </div>
                    <label className="relative mt-0.5 flex items-center gap-0.5 whitespace-nowrap">
                        <input type="checkbox" defaultChecked className="size-[13px] appearance-none border border-[#333] bg-white" />
                        <svg viewBox="0 0 13 13" className="pointer-events-none absolute left-0 size-[13px]" fill="none" stroke="#222"><path d="M3 6l2.500 3L10 3.500" /></svg>
                        Показать условное форматирование на листах
                    </label>
                    <div className="relative mt-9">
                        <select aria-label="Итоги" className="block h-[22px] w-full appearance-none border border-[#1f5a8c] bg-[#cce4f7] pl-[3px]">
                            <option>Не рассчитано</option>
                        </select>
                        <Chevron className="absolute top-2 right-1 text-[#444]" />
                        <ul role="listbox" aria-label="Варианты итогов" className="absolute top-[21px] left-0 w-full border border-[#1b6aa5] bg-white leading-[13px] shadow-[2px_2px_2px_rgba(0,0,0,0.5)]">
                            {totals.map((item, i) => (
                                <li key={item} role="option" aria-selected={i === 0} className={i === 0 ? "bg-[#3399ff] px-px text-white" : "px-px"}>{item}</li>
                            ))}
                        </ul>
                        <div className="pointer-events-none absolute -top-5 left-16 size-12 rounded-full bg-[#f5f03c]/50 blur-[2px]" />
                        <svg viewBox="0 0 12 19" className="pointer-events-none absolute top-[7px] left-[88px] h-[19px] w-3" aria-hidden="true">
                            <path d="M.5 .5v15l3.500-3.300 2.500 5.800 2.300-1L6.300 11.300h5z" fill="#fff" stroke="#000" />
                        </svg>
                    </div>
                    <label className="mt-[72px] flex items-center gap-0.5">
                        <input type="radio" className="size-[13px] appearance-none rounded-full border border-[#333] bg-white" />
                        Как польз. текст:
                    </label>
                    <input aria-label="Пользовательский текст" disabled className="mt-[5px] ml-[15px] h-6 border border-[#cccccc] bg-white" />
                    <a href="#values" className="mt-3.5 ml-[3px] text-[#2a62a8] underline">Указание неск. значений</a>
                </div>
            </div>
            <div className="flex flex-1 items-start justify-end gap-2 pt-2 pr-[7px]">
                <button className="h-[22px] w-[73px] border-2 border-[#2a7ab8] bg-[#e1e1e1]">ОК</button>
                <button className="h-[22px] w-[73px] border border-[#adadad] bg-[#e1e1e1]">Отмена</button>
                <button className="h-[22px] w-[73px] border border-[#adadad] bg-[#e1e1e1]">Справка</button>
            </div>
            <div className="absolute right-0 bottom-0 -mr-1"><Grip /></div>
        </div>
    );
}

export default function App() {
    return (
        <div className="relative flex h-screen min-h-[900px] flex-col overflow-hidden border-r border-l border-[#666] bg-[#cdcdcd] font-[Open_Sans,sans-serif] text-[11px]">
            <TitleBar />
            <RibbonTabs />
            <Ribbon />
            <div className="mr-1 ml-1 flex h-[26px] items-center bg-[#e6f0d8] pl-2 text-[#9aa092]">Изменить спецификацию/количества</div>
            <main className="mt-0.5 flex min-h-0 flex-1 gap-1 pr-[3px] pl-[3px]">
                <Properties />
                <div className="flex min-w-0 flex-1">
                    <SheetView />
                    <ScheduleView />
                </div>
                <Browser />
            </main>
            <StatusBar />
            <ScheduleDialog />
            <div className="absolute right-[11px] bottom-6 flex size-10 items-center justify-center bg-[#666]/95">
                <svg viewBox="0 0 20 22" className="h-[22px] w-5" aria-hidden="true">
                    <path d="M1 4h17v17h-4v-9l-8 8-5-4 8-8H1z" fill="#a8843a" />
                    <path d="M1 0h18v18h-5v-8l-8 8-4-4 8-8H1z" fill="#ffd060" />
                </svg>
            </div>
        </div>
    );
}
